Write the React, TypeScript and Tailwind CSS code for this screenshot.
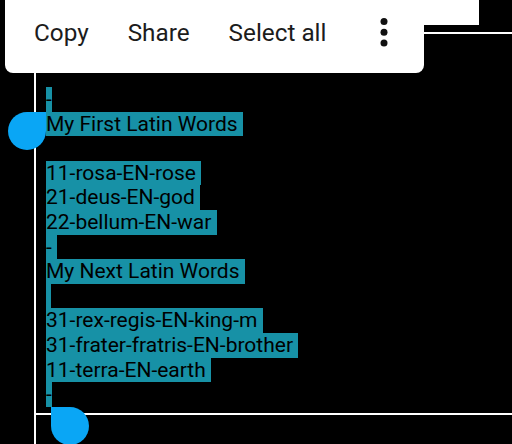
import React from 'react';

// selected lines of the note, trailing spaces are part of the selection
const lines: string[] = [
	'-',
	'My First Latin Words ',
	'',
	'11-rosa-EN-rose ',
	'21-deus-EN-god ',
	'22-bellum-EN-war ',
	'- ',
	'My Next Latin Words ',
	' ',
	'31-rex-regis-EN-king-m ',
	'31-frater-fratris-EN-brother ',
	'11-terra-EN-earth ',
	'-',
];

const MoreDots: React.FC = () => (
	<svg width="8" height="29" viewBox="0 0 8 29" className="mt-[-1.5px]">
		<circle cx="4" cy="3.5" r="3.5" fill="#111" />
		<circle cx="4" cy="14.2" r="3.5" fill="#111" />
		<circle cx="4" cy="24.9" r="3.5" fill="#111" />
	</svg>
);

const App: React.FC = () => {
	return (
		<div className="relative w-[512px] h-[444px] bg-black overflow-hidden font-['Roboto',sans-serif]">
			{/* Editor box */}
			<div className="ml-[34px] h-full border-l-2 border-white flex flex-col">
				<div className="h-[32px]">
					<div className="w-[443px] h-[25px] bg-white" />
				</div>
				<div className="border-t-2 border-b-2 border-white pt-[53px] pb-[6px] pl-[10px]">
					{lines.map((line, idx) => (
						<div key={idx} className="flex h-[24.6px]">
							{line.length > 0 && (
								<span className="bg-[#1791a6] text-black text-[21px] leading-[24.6px] whitespace-pre">
									{line}
								</span>
							)}
						</div>
					))}
				</div>
			</div>

			{/* Selection handles */}
			<div className="absolute left-[8px] top-[112px] w-[38px] h-[38px] bg-[#0aa6f5] rounded-tl-full rounded-bl-full rounded-br-full" />
			<div className="absolute left-[51px] top-[407px] w-[38px] h-[38px] bg-[#0aa6f5] rounded-tr-full rounded-bl-full rounded-br-full" />

			{/* Text selection toolbar */}
			<div className="absolute left-[5px] top-[-8px] w-[419px] h-[81px] rounded-[8px] bg-white flex items-start pt-[27px] pl-[29px] pr-[36px] text-[24.3px] leading-[28px] text-[#1c1c1c]">
				<div className="flex gap-[39px]">
					<span>Copy</span>
					<span>Share</span>
					<span>Select all</span>
				</div>
				<div className="ml-auto">
					<MoreDots />
				</div>
			</div>
		</div>
	);
};

export default App;
